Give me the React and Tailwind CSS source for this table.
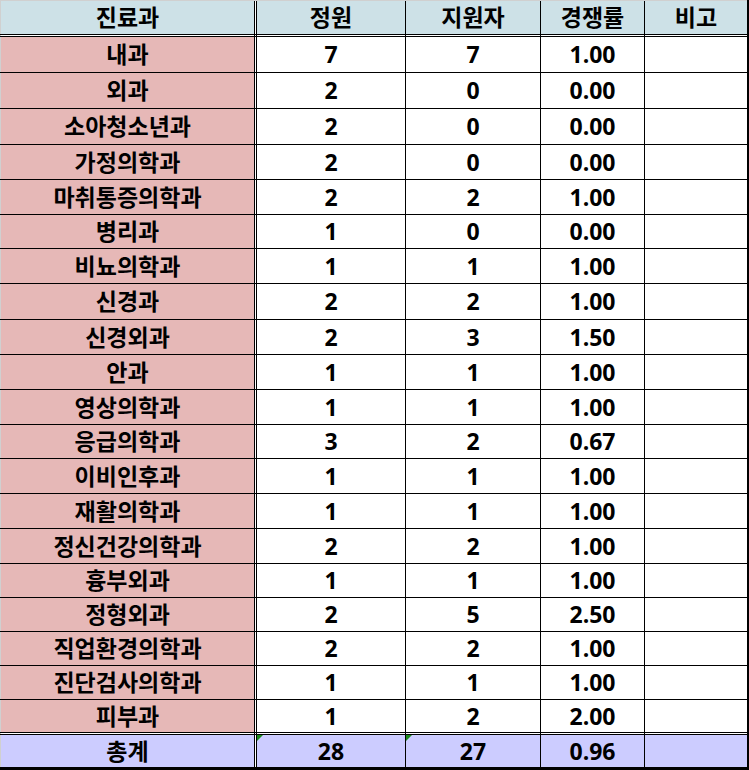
import React from "react";

const rows = [
  { h: "h-[35px]", n: "내과", a: "7", b: "7", r: "1.00" },
  { h: "h-[35px]", n: "외과", a: "2", b: "0", r: "0.00" },
  { h: "h-[35px]", n: "소아청소년과", a: "2", b: "0", r: "0.00" },
  { h: "h-[34px]", n: "가정의학과", a: "2", b: "0", r: "0.00" },
  { h: "h-[34px]", n: "마취통증의학과", a: "2", b: "2", r: "1.00" },
  { h: "h-[33px]", n: "병리과", a: "1", b: "0", r: "0.00" },
  { h: "h-[34px]", n: "비뇨의학과", a: "1", b: "1", r: "1.00" },
  { h: "h-[35px]", n: "신경과", a: "2", b: "2", r: "1.00" },
  { h: "h-[34px]", n: "신경외과", a: "2", b: "3", r: "1.50" },
  { h: "h-[34px]", n: "안과", a: "1", b: "1", r: "1.00" },
  { h: "h-[34px]", n: "영상의학과", a: "1", b: "1", r: "1.00" },
  { h: "h-[33px]", n: "응급의학과", a: "3", b: "2", r: "0.67" },
  { h: "h-[34px]", n: "이비인후과", a: "1", b: "1", r: "1.00" },
  { h: "h-[34px]", n: "재활의학과", a: "1", b: "1", r: "1.00" },
  { h: "h-[34px]", n: "정신건강의학과", a: "2", b: "2", r: "1.00" },
  { h: "h-[33px]", n: "흉부외과", a: "1", b: "1", r: "1.00" },
  { h: "h-[33px]", n: "정형외과", a: "2", b: "5", r: "2.50" },
  { h: "h-[33px]", n: "직업환경의학과", a: "2", b: "2", r: "1.00" },
  { h: "h-[33px]", n: "진단검사의학과", a: "1", b: "1", r: "1.00" },
  { h: "h-[32px]", n: "피부과", a: "1", b: "2", r: "2.00" },
];

const ko = "text-[23px] font-bold leading-none";
const num = "text-[23px] font-bold leading-none";

function Tri() {
  return (
    <div className="absolute left-0 top-0 w-0 h-0 border-t-[6px] border-r-[6px] border-t-[#1a8a1a] border-r-transparent" />
  );
}

function Row({ h, bg1, bg, c1, c2, c3, c4, c5, cls1, cls, tri }) {
  return (
    <div className={`flex ${h}`}>
      <div className="w-px bg-[#d0d0d0]" />
      <div className={`w-[253px] ${bg1} flex items-center justify-center ${cls1}`}>{c1}</div>
      <div className="w-px bg-black" />
      <div className="w-px bg-white" />
      <div className="w-px bg-black" />
      <div className={`relative w-[148px] ${bg} flex items-center justify-center ${cls}`}>
        {tri && <Tri />}
        {c2}
      </div>
      <div className="w-px bg-black" />
      <div className={`relative w-[134px] ${bg} flex items-center justify-center ${cls}`}>
        {tri && <Tri />}
        {c3}
      </div>
      <div className="w-px bg-black" />
      <div className={`w-[103px] ${bg} flex items-center justify-center ${cls}`}>{c4}</div>
      <div className="w-px bg-black" />
      <div className={`w-[102px] ${bg} flex items-center justify-center ${cls}`}>{c5}</div>
      <div className="w-[2px] bg-black" />
    </div>
  );
}

function HLine() {
  return <div className="h-px bg-black" />;
}

function Gap() {
  return <Row h="h-px" bg1="bg-white" bg="bg-white" />;
}

export default function App() {
  return (
    <div className="w-[749px] h-[770px] overflow-hidden bg-white text-black font-['Open_Sans','Noto_Sans_CJK_KR',sans-serif]">
      <div className="flex h-px">
        <div className="w-[747px] bg-[#d0d0d0]" />
        <div className="w-[2px] bg-black" />
      </div>
      <Row
        h="h-[33px]"
        bg1="bg-[#cde1e7]"
        bg="bg-[#cde1e7]"
        cls1={ko}
        cls={ko}
        c1="진료과"
        c2="정원"
        c3="지원자"
        c4="경쟁률"
        c5="비고"
      />
      <HLine />
      <Gap />
      <HLine />
      {rows.map((r, i) => (
        <React.Fragment key={i}>
          <Row
            h={r.h}
            bg1="bg-[#e6b8b7]"
            bg="bg-white"
            cls1={ko}
            cls={num}
            c1={r.n}
            c2={r.a}
            c3={r.b}
            c4={r.r}
            c5=""
          />
          <HLine />
        </React.Fragment>
      ))}
      <Gap />
      <HLine />
      <Row
        h="h-[32px]"
        bg1="bg-[#ccccff]"
        bg="bg-[#ccccff]"
        cls1={ko}
        cls={num}
        c1="총계"
        c2="28"
        c3="27"
        c4="0.96"
        c5=""
        tri
      />
      <div className="h-[3px] bg-black" />
    </div>
  );
}
